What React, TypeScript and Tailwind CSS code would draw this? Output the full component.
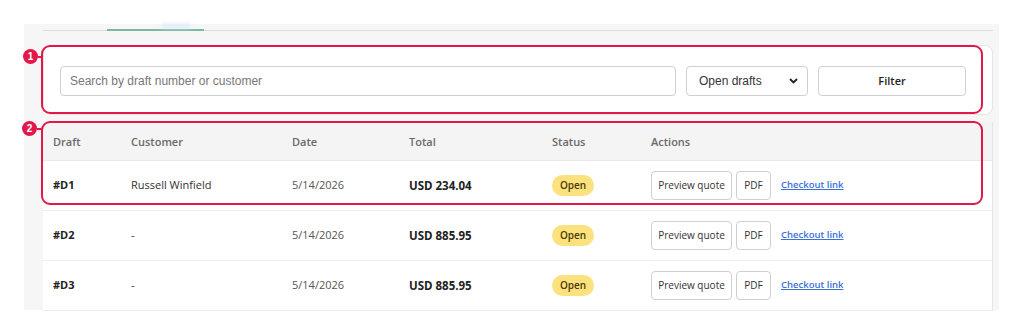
const rows = [
  { id: '#D1', customer: 'Russell Winfield', date: '5/14/2026', total: 'USD 234.04' },
  { id: '#D2', customer: '-', date: '5/14/2026', total: 'USD 885.95' },
  { id: '#D3', customer: '-', date: '5/14/2026', total: 'USD 885.95' },
];

const Marker = ({ n, top }: { n: number; top: string }) => (
  <div className={`absolute -left-[21px] ${top} flex items-center`}>
    <div className="w-[15px] h-[15px] rounded-full bg-[#e3174a] text-white text-[10px] font-bold leading-none flex items-center justify-center font-['Liberation_Sans',sans-serif]">
      {n}
    </div>
    <div className="w-[5px] h-[2px] bg-[#e3174a]" />
  </div>
);

export default function App() {
  return (
    <div className="w-[1024px] h-[336px] bg-white pt-[24px] pl-[24px] overflow-hidden font-['Open_Sans',sans-serif]">
      <div className="w-[975px] h-[286px] bg-[#f6f6f6] pl-[19px] pr-[6px]">
        {/* tabs */}
        <div className="relative h-[7px] border-b border-[#dcdcdc]">
          <div className="absolute left-[64px] bottom-[-1px] w-[97px] h-[2px] bg-[#79b8a8]" />
          <div className="absolute left-[118px] top-0 w-[30px] h-[4px] rounded-full bg-[#dbeaf7] blur-[2px]" />
        </div>

        {/* filter card */}
        <div className="relative mt-[14px] h-[70px] bg-white border border-[#e6e6e6] rounded-[8px] flex items-center pt-[2px] pl-[16px] pr-[26px] gap-[10px]">
          <input
            placeholder="Search by draft number or customer"
            className="flex-1 h-[30px] px-[9px] border border-[#cfcfcf] rounded-[4px] text-[12px] font-['Liberation_Sans',sans-serif] placeholder:text-[#777] outline-none"
          />
          <div className="w-[122px] h-[30px] border border-[#cfcfcf] rounded-[4px] flex items-center justify-between pl-[12px] pr-[9px] text-[12px] text-[#333] font-['Liberation_Sans',sans-serif]">
            <span>Open drafts</span>
            <svg width="9" height="6" viewBox="0 0 9 6">
              <path d="M1 1l3.5 3.5L8 1" fill="none" stroke="#222" strokeWidth="1.8" />
            </svg>
          </div>
          <button className="w-[148px] h-[30px] border border-[#cfcfcf] rounded-[4px] text-[11px] font-semibold text-[#222]">
            Filter
          </button>
          <div className="absolute -left-[3px] -top-[1px] w-[942px] h-[69px] border-[2.5px] border-[#e3174a] rounded-[9px] pointer-events-none" />
          <Marker n={1} top="top-[3px]" />
        </div>

        {/* table */}
        <div className="relative mt-[7px] bg-white border-r border-[#e6e6e6]">
          <div className="flex items-center h-[39px] pt-[3px] bg-[#f4f4f4] border-b border-[#e8e8e8] text-[11px] font-semibold text-[#6a6a6a]">
            <div className="w-[88px] pl-[10px]">Draft</div>
            <div className="w-[161px]">Customer</div>
            <div className="w-[117px]">Date</div>
            <div className="w-[143px]">Total</div>
            <div className="w-[99px]">Status</div>
            <div>Actions</div>
          </div>
          {rows.map((r) => (
            <div key={r.id} className="flex items-center h-[50px] border-b border-[#eeeeee] text-[11px] text-[#333]">
              <div className="w-[88px] pl-[10px] font-bold text-[#222]">{r.id}</div>
              <div className="w-[161px]">{r.customer}</div>
              <div className="w-[117px] text-[#555]">{r.date}</div>
              <div className="w-[143px] font-bold text-[#222] text-[11.5px]">{r.total}</div>
              <div className="w-[99px]">
                <span className="inline-flex items-center h-[21px] px-[8px] rounded-full bg-[#fbe27f] text-[10px] font-semibold text-[#4a3a05]">
                  Open
                </span>
              </div>
              <div className="flex items-center gap-[4px]">
                <button className="h-[29px] w-[81px] border border-[#cfcfcf] rounded-[4px] text-[10px] text-[#333]">
                  Preview quote
                </button>
                <button className="h-[29px] w-[35px] border border-[#cfcfcf] rounded-[4px] text-[10px] text-[#333]">
                  PDF
                </button>
                <a className="ml-[6px] text-[9.5px] font-semibold text-[#3a6fd8] underline">Checkout link</a>
              </div>
            </div>
          ))}
          <div className="absolute -left-[2px] -top-[1px] w-[942px] h-[84px] border-[2.5px] border-[#e3174a] rounded-[9px] pointer-events-none" />
          <Marker n={2} top="-top-[1px]" />
        </div>
      </div>
    </div>
  );
}
